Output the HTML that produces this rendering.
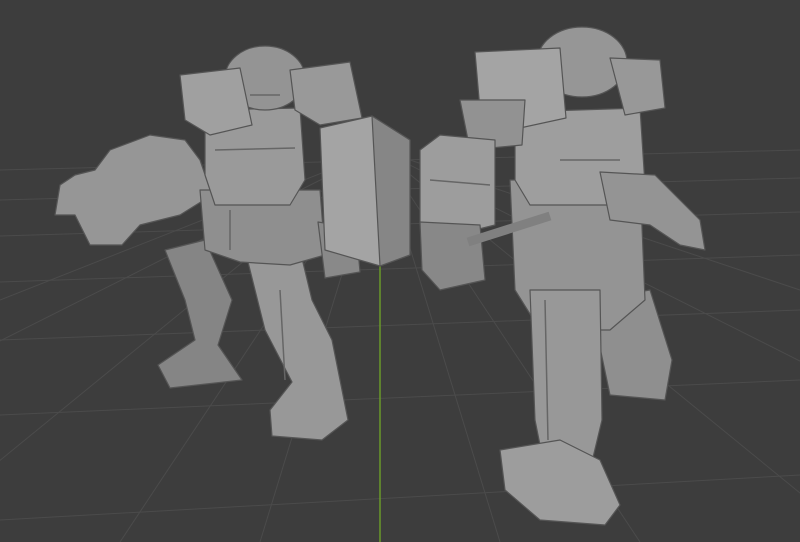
<!DOCTYPE html>
<html><head><meta charset="utf-8"><style>
html,body{margin:0;padding:0;background:#3d3d3d;overflow:hidden}
svg{display:block}
</style></head><body>
<svg width="800" height="542" viewBox="0 0 800 542" xmlns="http://www.w3.org/2000/svg">
<rect width="800" height="542" fill="#3d3d3d"/>
<g stroke="#4b4b4b" stroke-width="1" fill="none">
<path d="M0 170 L800 150 M0 200 L800 178 M0 236 L800 212 M0 282 L800 255 M0 340 L800 310 M0 415 L800 380 M0 520 L800 475"/>
<path d="M380 150 L-400 542 M380 150 L-100 542 M380 150 L120 542 M380 150 L260 542 M380 150 L500 542 M380 150 L640 542 M380 150 L860 542 M380 150 L1160 542 M380 150 L0 300 M380 150 L800 290"/>
</g>
<line x1="380" y1="240" x2="380" y2="542" stroke="#6a9a2a" stroke-width="1.5"/>
<g stroke="#555" stroke-width="1.2" stroke-linejoin="round">
<polygon fill="#969696" points="60,185 75,175 95,170 110,150 150,135 185,140 200,160 212,195 180,215 140,225 122,245 90,245 75,215 55,215"/>
<polygon fill="#858585" points="165,250 205,240 232,300 218,345 242,380 170,388 158,365 195,340 185,300"/>
<polygon fill="#989898" points="245,250 300,250 312,300 332,340 348,420 322,440 272,436 270,410 292,382 265,330"/>
<polygon fill="#8f8f8f" points="200,190 320,190 325,255 290,265 240,262 205,250"/>
<polygon fill="#9a9a9a" points="205,110 300,108 305,180 290,205 215,205 205,175"/>
<ellipse cx="265" cy="78" rx="40" ry="32" fill="#949494"/>
<polygon fill="#a0a0a0" points="180,75 240,68 252,125 210,135 185,120"/>
<polygon fill="#999" points="290,70 350,62 362,118 320,125 295,110"/>
<polygon fill="#898989" points="318,222 356,228 360,272 325,278"/>
<polygon fill="#a4a4a4" points="320,128 372,116 410,140 410,255 380,266 325,250"/>
<polygon fill="#868686" points="372,116 410,140 410,255 380,266"/>
<polygon fill="#8f8f8f" points="590,300 650,290 672,360 665,400 610,395"/>
<polygon fill="#949494" points="510,180 640,178 645,300 610,330 540,330 515,290"/>
<polygon fill="#989898" points="530,290 600,290 602,420 590,470 545,470 535,420"/>
<polygon fill="#9d9d9d" points="500,450 560,440 600,460 620,505 605,525 540,520 505,490"/>
<polygon fill="#9e9e9e" points="515,112 640,108 645,185 620,205 530,205 515,180"/>
<ellipse cx="582" cy="62" rx="45" ry="35" fill="#969696"/>
<polygon fill="#a4a4a4" points="475,52 560,48 566,118 520,128 480,110"/>
<polygon fill="#989898" points="610,58 660,60 665,108 625,115"/>
<polygon fill="#929292" points="460,100 525,100 522,145 470,150"/>
<polygon fill="#9d9d9d" points="420,150 440,135 495,140 495,225 455,235 420,225"/>
<polygon fill="#888" points="420,222 480,225 485,280 440,290 422,270"/>
<line x1="468" y1="242" x2="550" y2="216" stroke="#808080" stroke-width="9"/>
<polygon fill="#949494" points="600,172 655,175 700,220 705,250 680,245 650,225 610,220"/>
</g>
<g stroke="#666" stroke-width="1.5" fill="none">
<path d="M215 150 L295 148 M230 210 L230 250 M280 290 L285 380 M545 300 L548 440 M560 160 L620 160 M430 180 L490 185 M250 95 L280 95"/>
</g>
</svg>
</body></html>
